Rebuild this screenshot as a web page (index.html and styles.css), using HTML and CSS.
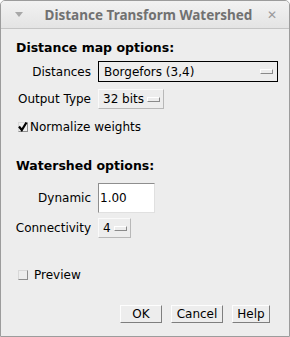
FILE: index.html
```html
<!DOCTYPE html>
<html lang="en">
  <head>
    <meta charset="UTF-8" />
    <title>Distance Transform Watershed</title>
    <link rel="stylesheet" href="styles.css">
  </head>
  <body>
    <div class="window">
      <div class="titlebar">
        <span class="menu-arrow"></span>
        <span class="title">Distance Transform Watershed</span>
        <span class="close">&#x2715;</span>
      </div>
      <div class="content">
        <h2 class="heading">Distance map options:</h2>
        <div class="form">
          <label class="label">Distances</label>
          <div class="choice wide focused"><span>Borgefors (3,4)</span><i class="knob"></i></div>
          <label class="label">Output Type</label>
          <div class="choice"><span>32 bits</span><i class="knob"></i></div>
        </div>
        <div class="check-row normalize">
          <span class="box">
            <svg width="10" height="10" viewBox="0 0 10 10"><path d="M1 4.5 L3.8 8 L8.5 0.5" stroke="#000" stroke-width="2.2" fill="none"/></svg>
          </span>
          <span>Normalize weights</span>
        </div>

        <h2 class="heading second">Watershed options:</h2>
        <div class="form lower">
          <label class="label">Dynamic</label>
          <div class="field">1.00</div>
          <label class="label">Connectivity</label>
          <div class="choice"><span>4</span><i class="knob"></i></div>
        </div>

        <div class="check-row preview">
          <span class="box"></span>
          <span>Preview</span>
        </div>

        <div class="buttons">
          <button class="btn ok">OK</button>
          <button class="btn cancel">Cancel</button>
          <button class="btn help">Help</button>
        </div>
      </div>
    </div>
  </body>
</html>
```

FILE: styles.css
```css
* {
  margin: 0;
  padding: 0;
  box-sizing: border-box;
}
body {
  background: #fff;
  font-family: "DejaVu Sans", sans-serif;
  font-size: 12px;
  color: #000;
}
.window {
  width: 290px;
  height: 337px;
  border: 1px solid #9c9c9c;
  border-radius: 5px 5px 0 0;
  background: #ededed;
  overflow: hidden;
}
.titlebar {
  height: 28px;
  display: flex;
  align-items: center;
  background: linear-gradient(#f2f2f2, #e4e4e4);
  border-bottom: 1px solid #c4c4c4;
  padding: 0 12px 0 14px;
}
.menu-arrow {
  width: 0;
  height: 0;
  border-left: 4px solid transparent;
  border-right: 4px solid transparent;
  border-top: 5px solid #a8a8a8;
}
.title {
  flex: 1;
  text-align: center;
  font-family: "Noto Sans", sans-serif;
  font-weight: bold;
  font-size: 13.5px;
  color: #717171;
  padding-left: 7px;
}
.close {
  color: #9a9a9a;
  font-size: 12px;
  font-weight: bold;
}
.content {
  padding: 10px 12px 0 15px;
}
.heading {
  font-size: 12.5px;
  font-weight: bold;
  height: 18px;
  line-height: 18px;
}
.heading.second {
  margin-top: 22px;
}
.form {
  display: grid;
  grid-template-columns: 75px auto;
  column-gap: 7px;
  row-gap: 7px;
  align-items: center;
  justify-items: start;
  margin-top: 4px;
}
.form.lower {
  margin-top: 8px;
  row-gap: 5px;
}
.label {
  justify-self: end;
}
.choice {
  display: flex;
  align-items: center;
  height: 20px;
  padding: 0 3px 0 4px;
  border: 1px solid;
  border-color: #fafafa #b8b8b8 #b8b8b8 #fafafa;
  gap: 3px;
}
.choice.wide {
  width: 180px;
  height: 21px;
  padding: 0 4px 0 5px;
  justify-content: space-between;
}
.choice.focused {
  border-color: #000;
}
.knob {
  display: block;
  width: 13px;
  height: 5px;
  border: 1px solid;
  border-color: #fff #8a8a8a #8a8a8a #fff;
}
.field {
  width: 57px;
  height: 30px;
  padding-left: 1px;
  display: flex;
  align-items: center;
  background: #fff;
  border: 1px solid;
  border-color: #8e8e8e #e0e0e0 #e0e0e0 #8e8e8e;
}
.check-row {
  display: flex;
  align-items: center;
  height: 16px;
}
.normalize {
  margin-top: 10px;
  gap: 2px;
  padding-left: 2px;
}
.preview {
  margin-top: 29px;
  gap: 6px;
  padding-left: 2px;
}
.box {
  width: 10px;
  height: 10px;
  border: 1px solid;
  border-color: #d8d8d8 #8e8e8e #8e8e8e #d8d8d8;
  display: flex;
  align-items: center;
  justify-content: center;
}
.box svg {
  flex: none;
}
.buttons {
  display: flex;
  justify-content: flex-end;
  gap: 9px;
  margin-top: 22px;
  padding-right: 7px;
}
.btn {
  font-family: "DejaVu Sans", sans-serif;
  font-size: 12px;
  height: 18px;
  padding: 0;
  background: #ededed;
  border: 1px solid;
  border-color: #fdfdfd #7e7e7e #7e7e7e #fdfdfd;
}
.btn.ok {
  width: 42px;
}
.btn.cancel {
  width: 52px;
}
.btn.help {
  width: 38px;
}
```
